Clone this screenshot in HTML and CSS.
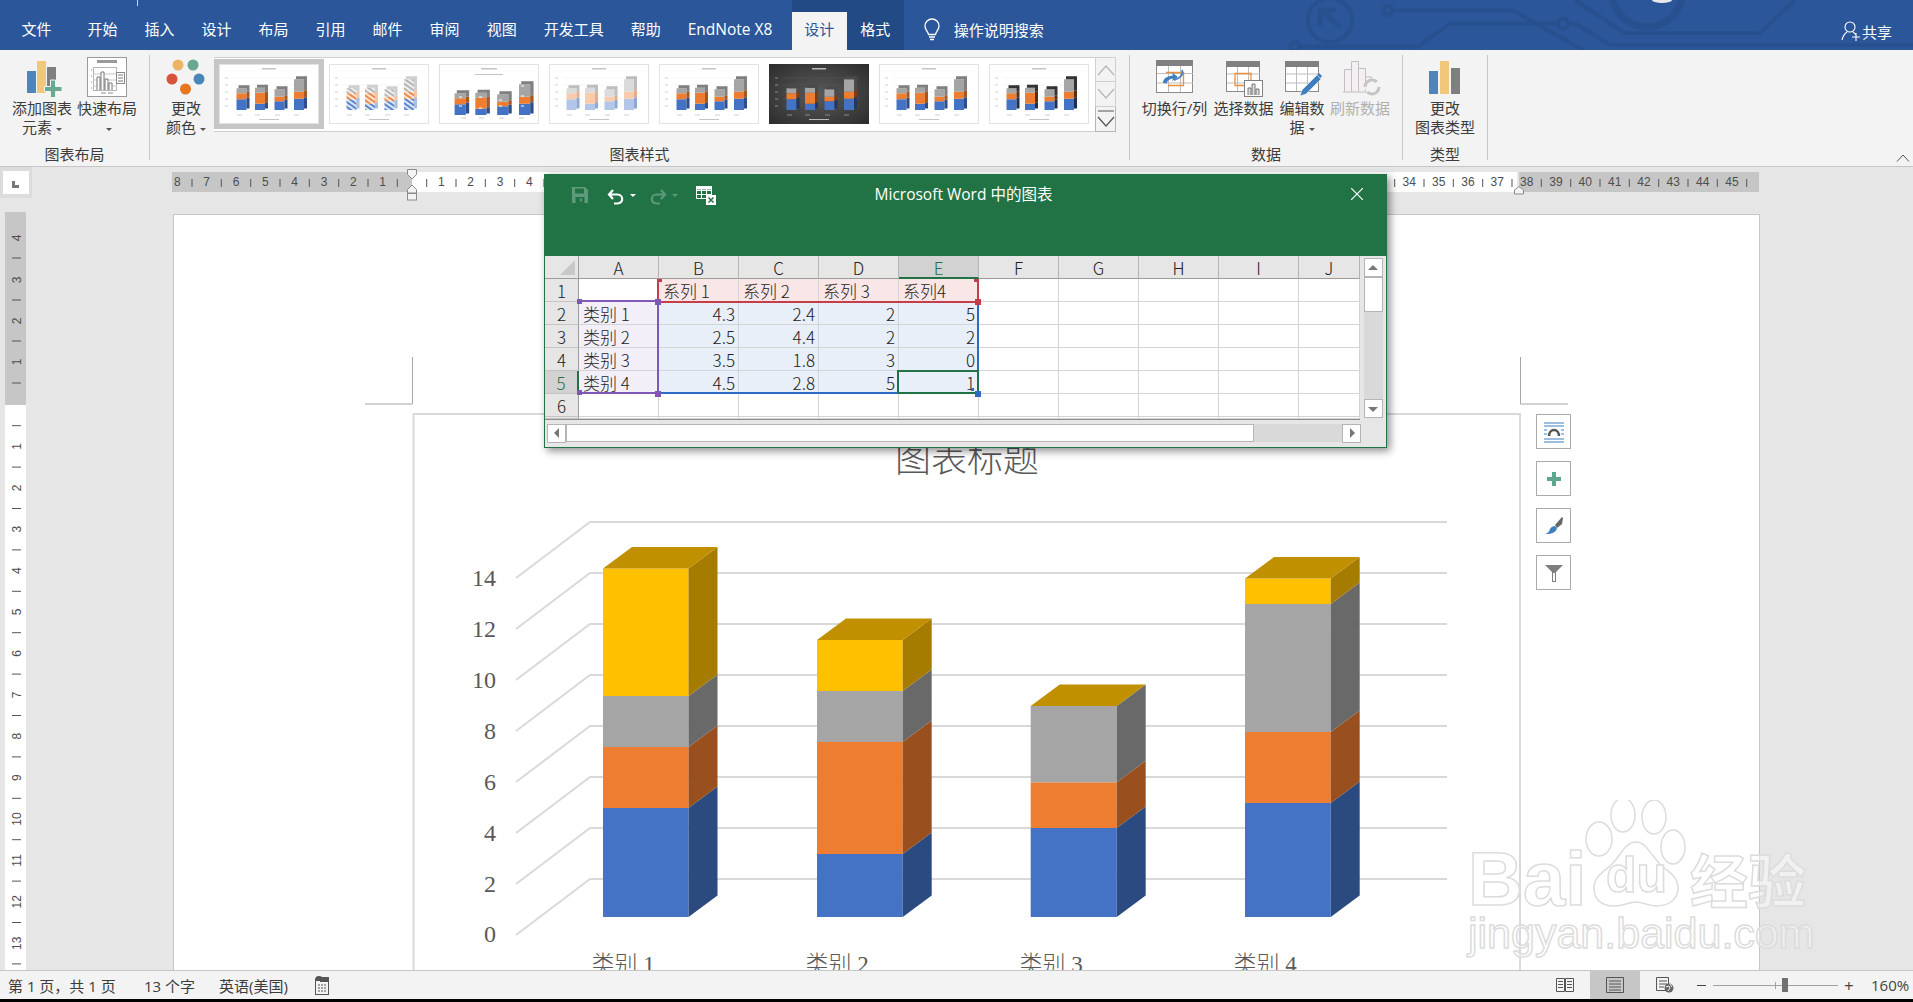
FILE: index.html
```html
<!DOCTYPE html>
<html lang="zh-CN">
<head>
  <meta charset="utf-8">
  <meta name="viewport" content="width=device-width, initial-scale=1.0">
  <title>图表 - Word</title>
  <link rel="stylesheet" href="styles.css">
</head>
<body>
<svg class="defs" width="0" height="0">
  <defs>
    <pattern id="stripe-b" width="4" height="4" patternUnits="userSpaceOnUse" patternTransform="rotate(35)"><rect width="4" height="4" fill="#dfe7f5"/><rect width="4" height="2" fill="#5b86cc"/></pattern>
    <pattern id="stripe-o" width="4" height="4" patternUnits="userSpaceOnUse" patternTransform="rotate(35)"><rect width="4" height="4" fill="#fbe6d8"/><rect width="4" height="2" fill="#ed8a47"/></pattern>
    <pattern id="stripe-g" width="4" height="4" patternUnits="userSpaceOnUse" patternTransform="rotate(35)"><rect width="4" height="4" fill="#f0f0f0"/><rect width="4" height="2" fill="#b5b5b5"/></pattern>
    <symbol id="mini-bars" viewBox="0 0 100 60">
      <rect class="s-b" x="17.5" y="35.25" width="10" height="10.75"/><rect class="s-o" x="17.5" y="29.25" width="10" height="6"/><rect class="s-g" x="17.5" y="24.25" width="10" height="5"/>
      <rect class="d-b" x="27.5" y="33.75" width="3" height="10.75"/><rect class="d-o" x="27.5" y="27.75" width="3" height="6"/><rect class="d-g" x="27.5" y="21.25" width="3" height="6.5"/><rect class="d-g" x="19.5" y="21.25" width="9" height="3"/>
      <rect class="s-b" x="36" y="39.75" width="10" height="6.25"/><rect class="s-o" x="36" y="28.75" width="10" height="11"/><rect class="s-g" x="36" y="23.75" width="10" height="5"/>
      <rect class="d-b" x="46" y="38.25" width="3" height="6.25"/><rect class="d-o" x="46" y="27.25" width="3" height="11"/><rect class="d-g" x="46" y="20.75" width="3" height="6.5"/><rect class="d-g" x="38" y="20.75" width="9" height="3"/>
      <rect class="s-b" x="55.5" y="37.25" width="10" height="8.75"/><rect class="s-o" x="55.5" y="32.75" width="10" height="4.5"/><rect class="s-g" x="55.5" y="25.25" width="10" height="7.5"/>
      <rect class="d-b" x="65.5" y="35.75" width="3" height="8.75"/><rect class="d-o" x="65.5" y="31.25" width="3" height="4.5"/><rect class="d-g" x="65.5" y="22.25" width="3" height="9"/><rect class="d-g" x="57.5" y="22.25" width="9" height="3"/>
      <rect class="s-b" x="75" y="34.75" width="10" height="11.25"/><rect class="s-o" x="75" y="27.75" width="10" height="7"/><rect class="s-g" x="75" y="15.25" width="10" height="12.5"/>
      <rect class="d-b" x="85" y="33.25" width="3" height="11.25"/><rect class="d-o" x="85" y="26.25" width="3" height="7"/><rect class="d-g" x="85" y="12.25" width="3" height="14"/><rect class="d-g" x="77" y="12.25" width="9" height="3"/>
    </symbol>
    <symbol id="mini-frame" viewBox="0 0 100 60">
      <rect class="mini-text" x="43" y="4" width="14" height="1.5"/>
      <path class="mini-grid" d="M14 14H90M14 21H90M14 28H90M14 35H90M14 42H90"/>
      <path class="mini-label" d="M6 14h3M6 21h3M6 28h3M6 35h3M6 42h3"/>
      <path class="mini-label" d="M18 51h5M36 51h5M56 51h5M75 51h5"/>
      <rect class="mini-text" x="40" y="55" width="20" height="1"/>
    </symbol>
  </defs>
</svg>

<div class="app">
  <header class="titlebar">
    <svg class="circuit" width="1913" height="50" viewBox="0 0 1913 50">
      <path d="M137.500 0v6" stroke="#c9d5e8"/>
      <g fill="none" stroke="#26508e" stroke-width="4">
        <circle cx="1330" cy="20" r="22"/>
        <path d="M1320 26V10H1336M1321 10L1340 27" stroke-width="5"/>
        <circle cx="1388" cy="10.5" r="4.5"/>
        <path d="M1392 10.5H1513L1583 50"/>
        <circle cx="1295" cy="46.5" r="4.5"/>
        <path d="M1300 46.5H1418L1450 23.5H1558"/>
        <circle cx="1563" cy="23.5" r="5"/>
        <path d="M1568 23.5H1575L1610 45H1913"/>
        <path d="M1575 0L1625 33H1760L1795 0"/>
        <circle cx="1647" cy="-8" r="35" stroke-width="7"/>
      </g>
      <ellipse cx="1662" cy="0" rx="10" ry="3" fill="#e8e8e8"/>
    </svg>
    <nav class="tabs">
      <span class="tab tab-file">文件</span>
      <span class="tab">开始</span>
      <span class="tab">插入</span>
      <span class="tab">设计</span>
      <span class="tab">布局</span>
      <span class="tab">引用</span>
      <span class="tab">邮件</span>
      <span class="tab">审阅</span>
      <span class="tab">视图</span>
      <span class="tab">开发工具</span>
      <span class="tab">帮助</span>
      <span class="tab tab-endnote">EndNote X8</span>
      <div class="context-tabs">
        <span class="tab tab-active">设计</span>
        <span class="tab tab-format">格式</span>
      </div>
      <div class="tell-me">
        <svg width="18" height="24" viewBox="0 0 18 24" fill="none" stroke="#fff" stroke-width="1.3">
          <path d="M5.5 16.5C5 13.5 2 12 2 8a7 7 0 0 1 14 0c0 4-3 5.5-3.5 8.5z"/>
          <path d="M6 19h6M7 21.5h4" stroke-width="1.6"/>
        </svg>
        <span>操作说明搜索</span>
      </div>
      <div class="share">
        <svg width="20" height="22" viewBox="0 0 20 22" fill="none" stroke="#fff" stroke-width="1.1">
          <circle cx="9" cy="7" r="5"/>
          <path d="M1 20c1-4 2-6 5-8M12 12c1 .5 2 1.5 2.500 2.500M15 13v8M11 17h8"/>
        </svg>
        <span>共享</span>
      </div>
    </nav>
  </header>

  <section class="ribbon">
    <div class="group group-layout">
      <div class="group-row">
        <div class="rbtn btn-add">
          <svg class="ricon" width="64" height="43" viewBox="11 55 64 43">
            <rect x="27" y="71" width="9" height="22" fill="#4e86bc"/>
            <rect x="37" y="61" width="9" height="32" fill="#f0c77b"/>
            <rect x="47" y="67" width="9" height="24" fill="#7f7f7f"/>
            <path d="M50.500 80h5v6.500h6.500v5h-6.500v6h-5v-6h-6v-5h6z" fill="#69a98f" stroke="#f3f3f3"/>
          </svg>
          <span class="rlabel">添加图表<br>元素<i class="caret"></i></span>
        </div>
        <div class="rbtn btn-quick">
          <svg class="ricon" width="64" height="43" viewBox="75 55 64 43">
            <rect x="87.500" y="57.500" width="39" height="39" fill="#fff" stroke="#9a9a9a"/>
            <rect x="97" y="60" width="20" height="3" fill="#9a9a9a"/>
            <path d="M91 70h1M91 76h1M91 82h1M91 88h1M101 93h5M108 93h5" stroke="#8a8a8a"/>
            <rect x="93.500" y="67.500" width="23" height="23" fill="none" stroke="#b5b5b5"/>
            <path d="M93 74h24M93 80h24M93 86h24" stroke="#c8c8c8"/>
            <path d="M97 90V77h3v13M101 90V72h3v18M105 90V79h3v11M109 90V83h3v7" fill="#fff" stroke="#777"/>
            <rect x="116.500" y="72.500" width="8" height="11" fill="#fff" stroke="#8a8a8a"/>
            <path d="M118 75h5M118 78h5M118 81h5" stroke="#777"/>
          </svg>
          <span class="rlabel">快速布局<br><i class="caret"></i></span>
        </div>
      </div>
      <div class="group-name">图表布局</div>
    </div>

    <div class="group group-styles">
      <div class="group-row">
        <div class="rbtn btn-colors">
          <svg class="ricon" width="56" height="43" viewBox="158 55 56 43">
            <circle cx="178" cy="65" r="5.500" fill="#ecb465"/>
            <circle cx="193" cy="65" r="5.500" fill="#68a890"/>
            <circle cx="172" cy="79" r="5.500" fill="#d9523a"/>
            <circle cx="199" cy="79" r="5.500" fill="#4a86b8"/>
            <circle cx="185.500" cy="89" r="5.500" fill="#e8761f"/>
          </svg>
          <span class="rlabel">更改<br>颜色<i class="caret"></i></span>
        </div>
        <div class="gallery">
          <div class="thumb thumb-on"><svg class="mini" viewBox="0 0 100 60"><use href="#mini-frame"/><use href="#mini-bars"/></svg></div>
          <div class="thumb"><svg class="mini mini-stripe" viewBox="0 0 100 60"><use href="#mini-frame"/><use href="#mini-bars"/></svg></div>
          <div class="thumb"><svg class="mini mini-big" viewBox="0 0 100 60"><rect class="mini-text" x="42" y="4" width="16" height="1.500"/><rect class="mini-text" x="36" y="10" width="28" height="1"/><use href="#mini-bars" transform="translate(-4 5) scale(1.12 1)"/><path d="M20 42h3M20 33h3M40 44h3M40 33h3M60 42h3M60 36h3M82 42h3M82 32h3M82 22h3" stroke="#fff"/><path d="M22 54h5M40 54h5M60 54h5M80 54h5" stroke="#ccc"/></svg></div>
          <div class="thumb"><svg class="mini mini-pale" viewBox="0 0 100 60"><use href="#mini-frame"/><use href="#mini-bars"/></svg></div>
          <div class="thumb"><svg class="mini" viewBox="0 0 100 60"><use href="#mini-frame"/><use href="#mini-bars"/></svg></div>
          <div class="thumb thumb-dark"><svg class="mini mini-dark" viewBox="0 0 100 60"><use href="#mini-frame"/><use href="#mini-bars"/></svg></div>
          <div class="thumb"><svg class="mini" viewBox="0 0 100 60"><use href="#mini-frame"/><use href="#mini-bars"/></svg></div>
          <div class="thumb"><svg class="mini mini-black" viewBox="0 0 100 60"><use href="#mini-frame"/><use href="#mini-bars"/></svg></div>
          <div class="gallery-scroll">
            <div class="gal-btn"><svg width="18" height="12" viewBox="0 0 18 12" fill="none" stroke="#b5b5b5" stroke-width="1.200"><path d="M1 11L9 2l8 9"/></svg></div>
            <div class="gal-btn"><svg width="18" height="12" viewBox="0 0 18 12" fill="none" stroke="#b5b5b5" stroke-width="1.200"><path d="M1 1l8 9 8-9"/></svg></div>
            <div class="gal-btn gal-more"><svg width="18" height="20" viewBox="0 0 18 20" fill="none" stroke="#555" stroke-width="1.200"><path d="M1 2h16M1 8l8 9 8-9"/></svg></div>
          </div>
        </div>
      </div>
      <div class="group-name">图表样式</div>
    </div>

    <div class="group group-data">
      <div class="group-row">
        <div class="rbtn btn-switch">
          <svg class="ricon" width="69" height="43" viewBox="1140 55 69 43">
            <rect x="1156.500" y="60.500" width="36" height="32" fill="#fff" stroke="#8a8a8a"/>
            <rect x="1156" y="60" width="37" height="6" fill="#808080"/>
            <path d="M1168.500 66v26M1180.500 66v26M1157 73.500h36M1157 83h36" stroke="#bdbdbd"/>
            <path d="M1166 72.500h17.500V85.500H1168" fill="none" stroke="#e8913f" stroke-width="1.300"/>
            <path d="M1163 83c0-5 5-7 10-7.500l-1-3 6 4.500-6 4 1-2.500c-3 .5-6 2-6 5z" fill="#3f7fbf"/>
            <path d="M1182 70c2 5-3 9-8 10" fill="none" stroke="#3f7fbf" stroke-width="1.800"/>
          </svg>
          <span class="rlabel">切换行/列</span>
        </div>
        <div class="rbtn btn-select">
          <svg class="ricon" width="69" height="43" viewBox="1209 55 69 43">
            <rect x="1226.500" y="61.500" width="33" height="30" fill="#fff" stroke="#8a8a8a"/>
            <rect x="1226" y="61" width="34" height="6" fill="#808080"/>
            <path d="M1237.500 67v24M1248.500 67v24M1227 74h33M1227 83h33" stroke="#bdbdbd"/>
            <path d="M1235 73.500h16v12h-16z" fill="none" stroke="#e8913f" stroke-width="1.300"/>
            <rect x="1244.500" y="80.500" width="18" height="16" fill="#fff" stroke="#808080"/>
            <path d="M1248 95v-7h3v7M1252 95V84h3v11M1256 95v-6h3v6" fill="#ddd" stroke="#777"/>
          </svg>
          <span class="rlabel">选择数据</span>
        </div>
        <div class="rbtn btn-edit">
          <svg class="ricon" width="48" height="43" viewBox="1278 55 48 43">
            <rect x="1285.500" y="61.500" width="33" height="30" fill="#fff" stroke="#8a8a8a"/>
            <rect x="1285" y="61" width="34" height="6" fill="#808080"/>
            <path d="M1296.500 67v24M1307.500 67v24M1286 74h33M1286 83h33" stroke="#bdbdbd"/>
            <path d="M1300 96l2-6 15-15 4 4-15 15z" fill="#3f7fbf" stroke="#f3f3f3" stroke-width=".6"/>
            <path d="M1319 73l3 3-1.500 2-3.500-3z" fill="#3f7fbf"/>
          </svg>
          <span class="rlabel">编辑数<br>据<i class="caret"></i></span>
        </div>
        <div class="rbtn btn-refresh">
          <svg class="ricon" width="60" height="43" viewBox="1330 55 60 43">
            <path d="M1344.500 91.500v-22h7v22M1351.500 91.500v-30h7v30M1358.500 91.500v-23h7v23" fill="#f3eff2" stroke="#c4bec2"/>
            <path d="M1365.500 91v-14h6v8" fill="#f3f3f3" stroke="#c4bec2"/>
            <path d="M1343 92h26" stroke="#c4bec2"/>
            <circle cx="1372" cy="87" r="7" fill="#f3f3f3" stroke="#c4c4c4" stroke-width="3" stroke-dasharray="16 6"/>
          </svg>
          <span class="rlabel rlabel-off">刷新数据</span>
        </div>
      </div>
      <div class="group-name">数据</div>
    </div>

    <div class="group group-type">
      <div class="group-row">
        <div class="rbtn btn-type">
          <svg class="ricon" width="84" height="43" viewBox="1403 55 84 43">
            <rect x="1429" y="71" width="9" height="23" fill="#4e86bc"/>
            <rect x="1440" y="61" width="9" height="33" fill="#f0c77b"/>
            <rect x="1451" y="68" width="9" height="26" fill="#7f7f7f"/>
          </svg>
          <span class="rlabel">更改<br>图表类型</span>
        </div>
      </div>
      <div class="group-name">类型</div>
    </div>

    <svg class="collapse" width="14" height="8" viewBox="0 0 14 8" fill="none" stroke="#555"><path d="M1 7.500L7 1l6 6.500"/></svg>
  </section>

  <main class="workspace">
    <div class="ruler-row">
      <div class="tab-stop"><div class="tab-stop-box"><i class="tab-glyph"></i></div></div>
      <svg class="hruler" width="1587" height="34" viewBox="172 167 1587 34">
        <rect x="172" y="172" width="240" height="20" fill="#c6c6c6"/>
        <rect x="412" y="172" width="1105" height="20" fill="#fff"/>
        <rect x="1519" y="172" width="240" height="20" fill="#c6c6c6"/>
        <path class="ticks" d="M192 179v8M221.300 179v8M250.700 179v8M280 179v8M309.300 179v8M338.700 179v8M368 179v8M397.300 179v8M426.700 179v8M456 179v8M485.300 179v8M514.700 179v8M544 179v8M1394.700 179v8M1424 179v8M1453.300 179v8M1482.700 179v8M1512 179v8M1541.300 179v8M1570.700 179v8M1600 179v8M1629.300 179v8M1658.700 179v8M1688 179v8M1717.300 179v8M1746.700 179v8"/>
        <g class="rnum">
          <text x="177.300" y="186">8</text><text x="206.700" y="186">7</text><text x="236" y="186">6</text><text x="265.300" y="186">5</text><text x="294.700" y="186">4</text><text x="324" y="186">3</text><text x="353.300" y="186">2</text><text x="382.700" y="186">1</text>
          <text x="441.300" y="186">1</text><text x="470.700" y="186">2</text><text x="500" y="186">3</text><text x="529.300" y="186">4</text>
          <text x="1409.300" y="186">34</text><text x="1438.700" y="186">35</text><text x="1468" y="186">36</text><text x="1497.300" y="186">37</text><text x="1526.700" y="186">38</text><text x="1556" y="186">39</text><text x="1585.300" y="186">40</text><text x="1614.700" y="186">41</text><text x="1644" y="186">42</text><text x="1673.300" y="186">43</text><text x="1702.700" y="186">44</text><text x="1732" y="186">45</text>
        </g>
        <g fill="#f3f3f3" stroke="#8a8a8a">
          <path d="M407.500 169.500h9v5l-4.500 4.500-4.500-4.500z"/>
          <path d="M412 185l4.500 4.500v3.500h-9v-3.500z"/>
          <rect x="407.500" y="193.500" width="9" height="6.500"/>
          <path d="M1519 186.500l4.500 3.500v4h-9v-4z"/>
        </g>
      </svg>
    </div>

    <div class="doc-row">
      <svg class="vruler" width="21" height="758" viewBox="5 212 21 758">
        <rect x="5" y="212" width="21" height="193" fill="#c6c6c6"/>
        <rect x="5" y="405" width="21" height="565" fill="#fff"/>
        <path class="ticks" d="M12 258h9M12 300h9M12 341h9M12 383h9M12 425.700h9M12 467.100h9M12 508.500h9M12 549.900h9M12 591.300h9M12 632.700h9M12 674.100h9M12 715.500h9M12 756.900h9M12 798.300h9M12 839.700h9M12 881.100h9M12 922.500h9M12 963.900h9"/>
        <g class="rnum">
          <text transform="rotate(-90 21 238)" x="21" y="238">4</text><text transform="rotate(-90 21 280)" x="21" y="280">3</text><text transform="rotate(-90 21 321)" x="21" y="321">2</text><text transform="rotate(-90 21 362)" x="21" y="362">1</text>
          <text transform="rotate(-90 21 446.400)" x="21" y="446.400">1</text><text transform="rotate(-90 21 487.800)" x="21" y="487.800">2</text><text transform="rotate(-90 21 529.200)" x="21" y="529.200">3</text><text transform="rotate(-90 21 570.600)" x="21" y="570.600">4</text><text transform="rotate(-90 21 612)" x="21" y="612">5</text><text transform="rotate(-90 21 653.400)" x="21" y="653.400">6</text><text transform="rotate(-90 21 694.800)" x="21" y="694.800">7</text><text transform="rotate(-90 21 736.200)" x="21" y="736.200">8</text><text transform="rotate(-90 21 777.600)" x="21" y="777.600">9</text><text transform="rotate(-90 21 819)" x="21" y="819">10</text><text transform="rotate(-90 21 860.400)" x="21" y="860.400">11</text><text transform="rotate(-90 21 901.800)" x="21" y="901.800">12</text><text transform="rotate(-90 21 943.200)" x="21" y="943.200">13</text>
        </g>
      </svg>

      <div class="page">
        <svg class="chart" width="1585" height="756" viewBox="174 215 1585 756">
          <path d="M412.500 357V404H365M1520.500 357V404H1568" fill="none" stroke="#a6a6a6"/>
          <path d="M413.500 980V414H1520V980" fill="#fff" stroke="#d9d9d9" stroke-width="2"/>
          <text class="chart-title" x="967" y="472">图表标题</text>
          <path class="grid" d="M516 578L590 522H1447M516 629L590 573H1447M516 680L590 624H1447M516 731L590 675H1447M516 782L590 726H1447M516 833L590 777H1447M516 884L590 828H1447M516 935L590 879H1447"/>
          <g class="axis">
            <text x="496" y="586">14</text><text x="496" y="637">12</text><text x="496" y="688">10</text><text x="496" y="739">8</text><text x="496" y="790">6</text><text x="496" y="841">4</text><text x="496" y="892">2</text><text x="496" y="942">0</text>
          </g>

          <!-- 类别 1 -->
          <rect class="f-blue" x="603" y="808" width="85.500" height="109"/>
          <rect class="f-orange" x="603" y="747" width="85.500" height="61"/>
          <rect class="f-gray" x="603" y="696" width="85.500" height="51"/>
          <rect class="f-yellow" x="603" y="568.500" width="85.500" height="127.500"/>
          <polygon class="e-blue" points="688.500,917 717.500,895.500 717.500,786.500 688.500,808"/>
          <polygon class="e-orange" points="688.500,808 717.500,786.500 717.500,725.500 688.500,747"/>
          <polygon class="e-gray" points="688.500,747 717.500,725.500 717.500,674.500 688.500,696"/>
          <polygon class="e-yellow" points="688.500,696 717.500,674.500 717.500,547 688.500,568.500"/>
          <polygon class="e-top" points="603,568.500 688.500,568.500 717.500,547 632,547"/>

          <!-- 类别 2 -->
          <rect class="f-blue" x="817" y="854" width="85.700" height="63"/>
          <rect class="f-orange" x="817" y="742" width="85.700" height="112"/>
          <rect class="f-gray" x="817" y="691" width="85.700" height="51"/>
          <rect class="f-yellow" x="817" y="640" width="85.700" height="51"/>
          <polygon class="e-blue" points="902.700,917 931.700,895.500 931.700,832.500 902.700,854"/>
          <polygon class="e-orange" points="902.700,854 931.700,832.500 931.700,720.500 902.700,742"/>
          <polygon class="e-gray" points="902.700,742 931.700,720.500 931.700,669.500 902.700,691"/>
          <polygon class="e-yellow" points="902.700,691 931.700,669.500 931.700,618.500 902.700,640"/>
          <polygon class="e-top" points="817,640 902.700,640 931.700,618.500 846,618.500"/>

          <!-- 类别 3 -->
          <rect class="f-blue" x="1030.700" y="828" width="86" height="89"/>
          <rect class="f-orange" x="1030.700" y="782.300" width="86" height="45.700"/>
          <rect class="f-gray" x="1030.700" y="706" width="86" height="76.300"/>
          <polygon class="e-blue" points="1116.700,917 1145.700,895.500 1145.700,806.500 1116.700,828"/>
          <polygon class="e-orange" points="1116.700,828 1145.700,806.500 1145.700,760.800 1116.700,782.300"/>
          <polygon class="e-gray" points="1116.700,782.300 1145.700,760.800 1145.700,684.500 1116.700,706"/>
          <polygon class="e-top" points="1030.700,706 1116.700,706 1145.700,684.500 1059.700,684.500"/>

          <!-- 类别 4 -->
          <rect class="f-blue" x="1245" y="803" width="85.700" height="114"/>
          <rect class="f-orange" x="1245" y="732" width="85.700" height="71"/>
          <rect class="f-gray" x="1245" y="604" width="85.700" height="128"/>
          <rect class="f-yellow" x="1245" y="578.500" width="85.700" height="25.500"/>
          <polygon class="e-blue" points="1330.700,917 1359.700,895.500 1359.700,781.500 1330.700,803"/>
          <polygon class="e-orange" points="1330.700,803 1359.700,781.500 1359.700,710.500 1330.700,732"/>
          <polygon class="e-gray" points="1330.700,732 1359.700,710.500 1359.700,582.500 1330.700,604"/>
          <polygon class="e-yellow" points="1330.700,604 1359.700,582.500 1359.700,557 1330.700,578.500"/>
          <polygon class="e-top" points="1245,578.500 1330.700,578.500 1359.700,557 1274,557"/>

          <g class="cats">
            <text x="623" y="972">类别 1</text><text x="837" y="972">类别 2</text><text x="1051" y="972">类别 3</text><text x="1265" y="972">类别 4</text>
          </g>
        </svg>

        <div class="chart-tools">
          <div class="tool">
            <svg width="22" height="22" viewBox="0 0 22 22" fill="none"><path d="M1 2h20M1 5h20M1 18h20M1 21h20" stroke="#3f7fbf"/><path d="M1 9h3M18 9h3M1 13h3M18 13h3" stroke="#3f7fbf"/><path d="M6 15c0-8 10-8 10 0" stroke="#555" stroke-width="2.500"/></svg>
          </div>
          <div class="tool">
            <svg width="16" height="16" viewBox="0 0 16 16"><path d="M6 1h4v5h5v4h-5v5H6v-5H1V6h5z" fill="#5da88c"/></svg>
          </div>
          <div class="tool">
            <svg width="20" height="20" viewBox="0 0 20 20"><path d="M11 9l7-8 1 1-1 6-5 4z" fill="#666"/><path d="M11 10l2 2c-1 4-4 6-12 6 3-1 4-2 5-5 1-2 3-3 5-3z" fill="#3f7fbf"/></svg>
          </div>
          <div class="tool">
            <svg width="20" height="20" viewBox="0 0 20 20"><path d="M1 2h18l-7 7v10H8V9z" fill="#7f7f7f"/><path d="M9 10v8h2v-8" fill="#fff"/></svg>
          </div>
        </div>
      </div>
    </div>
  </main>

  <footer class="statusbar">
    <span class="st st-page">第 1 页，共 1 页</span>
    <span class="st st-words">13 个字</span>
    <span class="st st-lang">英语(美国)</span>
    <svg class="st-macro" width="16" height="19" viewBox="0 0 16 19"><circle cx="5" cy="4" r="4" fill="#555"/><rect x="1.500" y="4.500" width="13" height="14" fill="#f3f3f3" stroke="#555"/><rect x="6" y="1" width="9" height="5" fill="#555"/><path d="M4 9h2M7 9h2M10 9h2M4 12h2M7 12h2M10 12h2M4 15h2M7 15h2M10 15h2" stroke="#555"/></svg>
    <div class="status-right">
      <div class="view">
        <svg width="18" height="15" viewBox="0 0 18 15" fill="none" stroke="#555"><path d="M.5.500h8v13h-8zM9.500.500h8v13h-8zM2 3.500h5M2 6.500h5M2 9.500h5M11 3.500h5M11 6.500h5M11 9.500h5"/></svg>
      </div>
      <div class="view view-on">
        <svg width="18" height="16" viewBox="0 0 18 16" fill="none" stroke="#555"><path d="M.5.500h17v15H.5zM3 4h12M3 7h12M3 10h12M3 13h12"/></svg>
      </div>
      <div class="view">
        <svg width="18" height="16" viewBox="0 0 18 16" fill="none"><path d="M.5.500h12v13H.5zM3 4h8M3 7h8M3 10h5" stroke="#555"/><circle cx="13" cy="11" r="4.500" fill="#666"/><path d="M10 10l3-1 1 2-2 3M14 7l2 3" stroke="#f3f3f3"/></svg>
      </div>
      <div class="zoom">
        <i class="zoom-minus"></i>
        <div class="zoom-track"><i class="zoom-mark"></i><i class="zoom-thumb"></i></div>
        <span class="zoom-plus">+</span>
        <span class="zoom-pct">160%</span>
      </div>
    </div>
  </footer>
  <div class="taskbar"></div>

  <!-- 浮动的 Excel 窗口 -->
  <section class="xl-window">
    <div class="xl-head">
      <svg class="xl-save" width="16" height="16" viewBox="0 0 16 16"><path d="M0 0h13l3 3v13H0z" fill="#5f9a7c"/><rect x="3" y="1.500" width="9" height="5" fill="#217346"/><rect x="3.500" y="10" width="9" height="6" fill="#217346"/><rect x="8" y="11.500" width="2" height="3" fill="#5f9a7c"/></svg>
      <svg class="xl-undo" width="18" height="16" viewBox="0 0 18 16" fill="none" stroke="#fff" stroke-width="2.200"><path d="M6 1L2 5.500 6 10M2.500 5.500h8c6 0 6.500 9 0 9H7"/></svg>
      <i class="caret caret-white"></i>
      <svg class="xl-redo" width="18" height="16" viewBox="0 0 18 16" fill="none" stroke="#5c9a7a" stroke-width="2.200"><path d="M12 1l4 4.500-4 4.500M15.500 5.500h-8c-6 0-6.500 9 0 9H11"/></svg>
      <i class="caret caret-dim"></i>
      <svg class="xl-table" width="20" height="19" viewBox="0 0 20 19"><path d="M.5.500h15v12H.5zM.5 4.500h15M.5 8.500h15M5.500.500v12M10.500.500v12" fill="none" stroke="#fff"/><rect x="0" y="0" width="16" height="3.500" fill="#fff"/><rect x="10" y="9" width="10" height="10" fill="#fff"/><path d="M12.500 11.500l5 5M17.500 11.500l-5 5" stroke="#217346" stroke-width="1.500"/></svg>
      <span class="xl-title">Microsoft Word 中的图表</span>
      <svg class="xl-close" width="12" height="12" viewBox="0 0 12 12" stroke="#fff" stroke-width="1.200"><path d="M0 0l12 12M12 0L0 12"/></svg>
    </div>

    <div class="xl-body">
      <div class="xl-left">
        <div class="sheet">
          <div class="corner"><i class="corner-tri"></i></div>
          <div class="col-h">A</div><div class="col-h">B</div><div class="col-h">C</div><div class="col-h">D</div><div class="col-h col-on">E</div><div class="col-h">F</div><div class="col-h">G</div><div class="col-h">H</div><div class="col-h">I</div><div class="col-h">J</div>

          <div class="row-h">1</div>
          <div class="cell"></div><div class="cell c-name">系列 1</div><div class="cell c-name">系列 2</div><div class="cell c-name">系列 3</div><div class="cell c-name">系列4</div>
          <div class="cell"></div><div class="cell"></div><div class="cell"></div><div class="cell"></div><div class="cell"></div>

          <div class="row-h">2</div>
          <div class="cell c-cat">类别 1</div><div class="cell c-val">4.3</div><div class="cell c-val">2.4</div><div class="cell c-val">2</div><div class="cell c-val">5</div>
          <div class="cell"></div><div class="cell"></div><div class="cell"></div><div class="cell"></div><div class="cell"></div>

          <div class="row-h">3</div>
          <div class="cell c-cat">类别 2</div><div class="cell c-val">2.5</div><div class="cell c-val">4.4</div><div class="cell c-val">2</div><div class="cell c-val">2</div>
          <div class="cell"></div><div class="cell"></div><div class="cell"></div><div class="cell"></div><div class="cell"></div>

          <div class="row-h">4</div>
          <div class="cell c-cat">类别 3</div><div class="cell c-val">3.5</div><div class="cell c-val">1.8</div><div class="cell c-val">3</div><div class="cell c-val">0</div>
          <div class="cell"></div><div class="cell"></div><div class="cell"></div><div class="cell"></div><div class="cell"></div>

          <div class="row-h row-on">5</div>
          <div class="cell c-cat">类别 4</div><div class="cell c-val">4.5</div><div class="cell c-val">2.8</div><div class="cell c-val">5</div><div class="cell c-val">1</div>
          <div class="cell"></div><div class="cell"></div><div class="cell"></div><div class="cell"></div><div class="cell"></div>

          <div class="row-h">6</div>
          <div class="cell"></div><div class="cell"></div><div class="cell"></div><div class="cell"></div><div class="cell"></div>
          <div class="cell"></div><div class="cell"></div><div class="cell"></div><div class="cell"></div><div class="cell"></div>

          <div class="row-h"></div>
          <div class="cell"></div><div class="cell"></div><div class="cell"></div><div class="cell"></div><div class="cell"></div>
          <div class="cell"></div><div class="cell"></div><div class="cell"></div><div class="cell"></div><div class="cell"></div>

          <!-- 数据区域的彩色选框 -->
          <div class="sel sel-cat"><i class="hd hd-tl"></i><i class="hd hd-bl"></i></div>
          <div class="sel sel-val"></div>
          <div class="sel sel-name"><i class="hd hd-tl"></i><i class="hd hd-tr"></i></div>
          <div class="sel sel-active"></div>
          <i class="hd hd-purple-a"></i>
          <i class="hd hd-purple-b"></i>
          <i class="hd hd-red"></i>
          <i class="hd hd-blue"></i>
          <i class="hd hd-fill"></i>
        </div>
        <div class="hscroll">
          <div class="sb-btn"><i class="arrow-left"></i></div>
          <div class="h-thumb"></div>
          <div class="h-track"></div>
          <div class="sb-btn"><i class="arrow-right"></i></div>
        </div>
      </div>
      <div class="vscroll">
        <div class="sb-btn"><i class="arrow-up"></i></div>
        <div class="v-thumb"></div>
        <div class="v-track"></div>
        <div class="sb-btn"><i class="arrow-down"></i></div>
      </div>
    </div>
  </section>

  <!-- 百度经验水印 -->
  <svg class="watermark" width="360" height="170" viewBox="1460 800 360 170">
    <g class="wm">
      <text class="wm-bai" x="1468" y="905">Bai</text>
      <ellipse cx="1623" cy="815" rx="12" ry="17"/>
      <ellipse cx="1654" cy="817" rx="12" ry="17"/>
      <ellipse cx="1599" cy="839" rx="13" ry="17"/>
      <ellipse cx="1673" cy="847" rx="12" ry="17"/>
      <path d="M1636 842c10 0 14 12 24 22 8 8 18 12 18 24 0 12-10 18-22 18-8 0-13-4-20-4s-12 4-22 4c-14 0-20-8-20-18 0-12 10-16 18-24 10-10 13-22 24-22z"/>
      <text class="wm-du" x="1606" y="892">du</text>
      <text class="wm-cn" x="1690" y="903">经验</text>
      <text class="wm-url" x="1468" y="948">jingyan.baidu.com</text>
    </g>
  </svg>
</div>
</body>
</html>
```

FILE: styles.css
```css
:root {
  --word-blue: #2b579a;
  --word-dark: #224b86;
  --ribbon: #f3f3f3;
  --desk: #e6e6e6;
  --line: #c6c6c6;
  --text: #3c3c3c;
  --xl-green: #217346;
  --cjk: "Open Sans", "Noto Sans CJK SC", sans-serif;
}

* {
  margin: 0;
  padding: 0;
  box-sizing: border-box;
}

body {
  width: 1913px;
  height: 1002px;
  overflow: hidden;
  font-family: var(--cjk);
  font-size: 15px;
  color: var(--text);
  background: #000;
}

.defs {
  position: absolute;
}

.app {
  position: relative;
  width: 1913px;
  height: 1002px;
  display: flex;
  flex-direction: column;
  overflow: hidden;
}

/* title bar and tabs */
.titlebar {
  position: relative;
  height: 50px;
  flex: none;
  background: var(--word-blue);
}

.circuit {
  position: absolute;
  left: 0;
  top: 0;
}

.tabs {
  position: relative;
  display: flex;
  align-items: flex-end;
  height: 50px;
}

.tab {
  height: 38px;
  padding: 0 13.5px;
  line-height: 35px;
  color: #fff;
  white-space: nowrap;
  flex: none;
}

.tab-file {
  padding: 0 22.5px 0 21.5px;
}

.tab-endnote {
  width: 114px;
  font-size: 15.5px;
}

.context-tabs {
  display: flex;
  align-items: flex-end;
  height: 50px;
  margin-left: 3.5px;
  background: var(--word-dark);
}

.tab-active {
  width: 55px;
  padding: 0 12.5px;
  background: var(--ribbon);
  color: var(--word-blue);
}

.tab-format {
  width: 57px;
}

.tell-me {
  display: flex;
  align-items: center;
  gap: 13px;
  height: 38px;
  margin-left: 19px;
  padding-bottom: 3px;
  color: #fff;
  font-size: 15px;
}

.share {
  display: flex;
  align-items: center;
  gap: 1px;
  height: 38px;
  margin-left: auto;
  padding: 0 21px 0 0;
  color: #fff;
  font-size: 15px;
}

/* ribbon */
.ribbon {
  position: relative;
  display: flex;
  flex: none;
  height: 117px;
  padding-top: 5px;
  background: var(--ribbon);
  border-bottom: 1px solid var(--line);
}

.group {
  display: flex;
  flex-direction: column;
  height: 105px;
  border-right: 1px solid var(--line);
}

.group-layout {
  width: 150px;
  padding-left: 11px;
}

.group-styles {
  width: 980px;
  padding-left: 8px;
}

.group-data {
  width: 273px;
  padding-left: 10px;
}

.group-type {
  width: 85px;
}

.group-row {
  display: flex;
  height: 85px;
}

.group-name {
  height: 20px;
  margin-bottom: -4px;
  margin-top: 4px;
  line-height: 20px;
  text-align: center;
}

.group-layout .group-name {
  margin-left: -11px;
}

.group-styles .group-name {
  margin-left: -8px;
}

.group-data .group-name {
  margin-left: -10px;
}

.rbtn {
  flex: none;
  text-align: center;
}

.btn-add,
.btn-quick {
  width: 64px;
}

.btn-add .rlabel {
  margin-left: -2px;
}

.btn-colors {
  width: 56px;
}

.btn-switch,
.btn-select {
  width: 69px;
}

.btn-edit {
  width: 48px;
  margin-right: 4px;
}

.btn-refresh {
  width: 60px;
}

.btn-type {
  width: 84px;
}

.ricon {
  display: block;
}

.rlabel {
  display: block;
  padding-top: 1px;
  line-height: 19px;
  white-space: nowrap;
}

.rlabel-off {
  color: #b1b1b1;
}

.caret {
  display: inline-block;
  width: 0;
  height: 0;
  margin-left: 4px;
  vertical-align: 2px;
  border-left: 3px solid transparent;
  border-right: 3px solid transparent;
  border-top: 3px solid #555;
}

.gallery {
  display: flex;
  flex: none;
  width: 902px;
  height: 75px;
  margin-top: 2px;
  padding-top: 1px;
  background: #fff;
  border: 1px solid #d0d0d0;
  border-left: 0;
}

.thumb {
  flex: none;
  width: 110px;
  height: 70px;
  padding: 5px;
}

.thumb-on {
  background: var(--line);
}

.mini {
  display: block;
  width: 100px;
  height: 60px;
  background: #fff;
  outline: 1px solid #e2e2e2;
  outline-offset: -1px;
  --b: #4472c4;
  --o: #ed7d31;
  --g: #a5a5a5;
  --bd: #2c4f8c;
  --od: #a8571f;
  --gd: #808080;
  --label: #d0d0d0;
  --rule: #f0f0f0;
  --ink: #c4c4c4;
}

.mini-stripe {
  --b: url(#stripe-b);
  --o: url(#stripe-o);
  --g: url(#stripe-g);
  --bd: #a9bde0;
  --od: #f2c4a6;
  --gd: #cfcfcf;
}

.mini-pale {
  --b: #b4c6e7;
  --o: #f8cbad;
  --g: #dbdbdb;
  --bd: #8ea7d4;
  --od: #e4ae8a;
  --gd: #bdbdbd;
}

.mini-dark {
  background: radial-gradient(ellipse at center, #5a5a5a, #2c2c2c);
  outline: 0;
  --rule: #555;
  --label: #8a8a8a;
  --ink: #bbb;
  --bd: #1f3864;
  --od: #843c0c;
  --gd: #4a4a4a;
}

.mini-black {
  --bd: #1d2f52;
  --od: #5c2e10;
  --gd: #333;
}

.s-b { fill: var(--b); }
.s-o { fill: var(--o); }
.s-g { fill: var(--g); }
.d-b { fill: var(--bd); }
.d-o { fill: var(--od); }
.d-g { fill: var(--gd); }
.mini-text { fill: var(--ink); }
.mini-grid { stroke: var(--rule); stroke-width: .6; fill: none; }
.mini-label { stroke: var(--label); stroke-width: 1; fill: none; }

.gallery-scroll {
  display: flex;
  flex-direction: column;
  flex: none;
  width: 21px;
  height: 75px;
  margin: -2px 0 0 1px;
  background: var(--ribbon);
}

.gal-btn {
  display: flex;
  align-items: center;
  justify-content: center;
  height: 25px;
  border: 1px solid #d0d0d0;
  border-top: 0;
}

.gal-btn:first-child {
  border-top: 1px solid #d0d0d0;
}

.gal-more {
  border-color: #b5b5b5;
}

.collapse {
  position: absolute;
  right: 3px;
  top: 104px;
}

/* document area */
.workspace {
  flex: 1;
  min-height: 0;
  display: flex;
  flex-direction: column;
  background: var(--desk);
}

.ruler-row {
  position: relative;
  display: flex;
  flex: none;
  height: 45px;
}

.tab-stop {
  flex: none;
  width: 32px;
  height: 31px;
  padding: 4px 3px;
  background: #dcdcdc;
}

.tab-stop-box {
  position: relative;
  width: 26px;
  height: 23px;
  background: #fff;
}

.tab-glyph {
  position: absolute;
  left: 9px;
  top: 10px;
  width: 7px;
  height: 7px;
  border-left: 3px solid #777;
  border-bottom: 3px solid #777;
}

.hruler {
  flex: none;
  margin-left: 140px;
  overflow: visible;
}

.ticks {
  stroke: #555;
  stroke-width: 1;
  fill: none;
}

.rnum text {
  font-family: "Liberation Sans", sans-serif;
  font-size: 12px;
  fill: #4d4d4d;
  text-anchor: middle;
}

.doc-row {
  display: flex;
  flex: 1;
  min-height: 0;
}

.vruler {
  flex: none;
  margin-left: 5px;
}

.page {
  position: relative;
  flex: none;
  width: 1587px;
  height: 756px;
  margin: 2px 0 0 147px;
  background: #fff;
  border: 1px solid var(--line);
  border-bottom: 0;
  overflow: hidden;
}

.chart {
  display: block;
}

.chart-title {
  font-family: "Liberation Serif", "Noto Sans CJK SC", serif;
  font-weight: 300;
  font-size: 36px;
  fill: #595959;
  text-anchor: middle;
}

.grid {
  fill: none;
  stroke: #d9d9d9;
  stroke-width: 2;
}

.axis text {
  font-family: "Liberation Serif", serif;
  font-size: 24px;
  fill: #595959;
  text-anchor: end;
}

.cats text {
  font-family: "Liberation Serif", "Noto Sans CJK SC", serif;
  font-weight: 300;
  font-size: 23px;
  fill: #595959;
  text-anchor: middle;
}

.f-blue { fill: #4472c4; }
.f-orange { fill: #ed7d31; }
.f-gray { fill: #a5a5a5; }
.f-yellow { fill: #ffc000; }
.e-blue { fill: #2a4a80; }
.e-orange { fill: #9a4f1e; }
.e-gray { fill: #696969; }
.e-yellow { fill: #a67c00; }
.e-top { fill: #c09000; }

.chart-tools {
  position: absolute;
  left: 1362px;
  top: 199px;
  display: flex;
  flex-direction: column;
  gap: 12px;
}

.tool {
  display: flex;
  align-items: center;
  justify-content: center;
  width: 35px;
  height: 35px;
  background: #fff;
  border: 1px solid #ababab;
}

/* status bar */
.statusbar {
  display: flex;
  align-items: center;
  flex: none;
  height: 29px;
  padding-left: 8px;
  background: var(--ribbon);
  border-top: 1px solid var(--line);
  font-size: 15px;
}

.st {
  white-space: nowrap;
}

.st-page {
  width: 136px;
}

.st-words {
  width: 75px;
}

.st-lang {
  width: 95px;
}

.status-right {
  display: flex;
  align-items: center;
  height: 100%;
  margin-left: auto;
}

.view {
  display: flex;
  align-items: center;
  justify-content: center;
  width: 50px;
  height: 100%;
}

.view-on {
  background: var(--line);
}

.zoom {
  display: flex;
  align-items: center;
  padding-left: 7px;
  width: 223px;
}

.zoom-minus {
  width: 9px;
  height: 1px;
  margin-right: 7px;
  background: #444;
}

.zoom-track {
  position: relative;
  width: 125px;
  height: 1px;
  background: #a0a0a0;
}

.zoom-mark {
  position: absolute;
  left: 62px;
  top: -3px;
  width: 1px;
  height: 7px;
  background: #a0a0a0;
}

.zoom-thumb {
  position: absolute;
  left: 69px;
  top: -7px;
  width: 6px;
  height: 14px;
  background: #707070;
}

.zoom-plus {
  margin-left: 6px;
  width: 27px;
  font-size: 17px;
  color: #444;
}

.zoom-pct {
  font-size: 15px;
  color: #444;
}

.taskbar {
  flex: none;
  height: 3px;
  background: #000;
}

/* excel window */
.xl-window {
  position: absolute;
  z-index: 2;
  left: 544px;
  top: 174px;
  width: 843px;
  height: 274px;
  background: var(--desk);
  border: 1px solid var(--xl-green);
  border-top: 0;
  box-shadow: 3px 3px 8px rgba(0, 0, 0, .45);
}

.xl-head {
  position: relative;
  display: flex;
  align-items: flex-start;
  height: 82px;
  padding: 13px 0 0 27px;
  background: var(--xl-green);
}

.xl-undo {
  margin-left: 19px;
  margin-top: 2px;
}

.caret-white {
  margin: 7px 0 0 5px;
  border-top-color: #fff;
}

.caret-dim {
  margin: 7px 0 0 5px;
  border-top-color: #5c9a7a;
}

.xl-redo {
  margin-left: 13px;
  margin-top: 2px;
}

.xl-table {
  margin-left: 18px;
  margin-top: -1px;
}

.xl-title {
  position: absolute;
  left: 0;
  right: 4px;
  top: 8px;
  text-align: center;
  color: #fff;
  font-size: 15.500px;
}

.xl-close {
  position: absolute;
  right: 23px;
  top: 14px;
}

.xl-body {
  display: flex;
}

.xl-left {
  width: 816px;
}

.sheet {
  position: relative;
  display: grid;
  grid-template-columns: 34px repeat(9, 80px) 61px;
  grid-template-rows: 23px repeat(6, 23px) 2px;
  width: 815px;
  height: 164px;
  font-family: "Noto Sans CJK SC", sans-serif;
  font-weight: 300;
  font-size: 17px;
  color: #222;
  background: #fff;
  border-bottom: 1px solid #8f8f8f;
}

.corner {
  position: relative;
  background: var(--desk);
  border-right: 1px solid #9b9b9b;
  border-bottom: 1px solid #9b9b9b;
}

.corner-tri {
  position: absolute;
  right: 3px;
  bottom: 3px;
  width: 0;
  height: 0;
  border-left: 15px solid transparent;
  border-bottom: 15px solid #c8c8c8;
}

.col-h {
  background: var(--desk);
  border-right: 1px solid #b5b5b5;
  border-bottom: 1px solid #9b9b9b;
  text-align: center;
  line-height: 24px;
}

.col-on {
  background: #d2d2d2;
  border-bottom: 2px solid var(--xl-green);
  color: var(--xl-green);
}

.row-h {
  background: var(--desk);
  border-right: 1px solid #9b9b9b;
  border-bottom: 1px solid #c4c4c4;
  text-align: center;
  line-height: 24px;
}

.row-on {
  background: #d2d2d2;
  border-right: 2px solid var(--xl-green);
  color: var(--xl-green);
}

.cell {
  border-right: 1px solid #d4d4d4;
  border-bottom: 1px solid #d4d4d4;
  padding: 0 3px 0 4px;
  line-height: 24px;
  white-space: nowrap;
}

.c-name {
  background: #f9e7e7;
}

.c-cat {
  background: #f3eff9;
}

.c-val {
  background: #e8eff9;
  text-align: right;
}

.sel {
  position: absolute;
}

.sel-cat {
  left: 34px;
  top: 44px;
  width: 80px;
  height: 94px;
  border: 2px solid #7f57b4;
  border-left: 0;
}

.sel-val {
  left: 114px;
  top: 46px;
  width: 320px;
  height: 92px;
  border-right: 2px solid #2e6cc4;
  border-bottom: 2px solid #2e6cc4;
}

.sel-name {
  left: 112px;
  top: 23px;
  width: 322px;
  height: 24px;
  border: 2px solid #c43e4a;
  border-top: 0;
}

.sel-active {
  left: 352px;
  top: 114px;
  width: 82px;
  height: 24px;
  border: 2px solid var(--xl-green);
}

.hd {
  position: absolute;
  display: block;
  width: 5px;
  height: 5px;
}

.sel-cat .hd-tl,
.sel-cat .hd-bl {
  left: -2px;
  background: #7f57b4;
}

.sel-cat .hd-tl {
  top: -3px;
}

.sel-cat .hd-bl {
  bottom: -3px;
}

.sel-name .hd-tl,
.sel-name .hd-tr {
  top: 0;
  height: 3px;
  background: #c43e4a;
}

.sel-name .hd-tl {
  left: -2px;
}

.sel-name .hd-tr {
  right: -2px;
}

.hd-purple-a,
.hd-purple-b {
  left: 110px;
  width: 6px;
  height: 6px;
  background: #7f57b4;
}

.hd-purple-a {
  top: 43px;
}

.hd-purple-b {
  top: 135px;
}

.hd-red {
  left: 430px;
  top: 43px;
  width: 6px;
  height: 6px;
  background: #c43e4a;
}

.hd-blue {
  left: 430px;
  top: 135px;
  width: 6px;
  height: 6px;
  background: #2e6cc4;
}

.hd-fill {
  left: 426px;
  top: 132px;
  width: 3px;
  height: 3px;
  background: #2e6cc4;
}

.hscroll {
  display: flex;
  height: 18px;
  margin: 4px 0 0 2px;
}

.sb-btn {
  position: relative;
  flex: none;
  width: 19px;
  height: 19px;
  background: #fff;
  border: 1px solid #b5b5b5;
}

.h-thumb {
  flex: none;
  width: 688px;
  background: #fff;
  border: 1px solid #b5b5b5;
}

.h-track {
  flex: 1;
  background: #d9d9d9;
}

.vscroll {
  display: flex;
  flex-direction: column;
  width: 19px;
  height: 160px;
  margin: 2px 0 0 3px;
}

.v-thumb {
  flex: none;
  height: 35px;
  background: #fff;
  border: 1px solid #b5b5b5;
}

.v-track {
  flex: 1;
  background: #d9d9d9;
}

.arrow-up,
.arrow-down,
.arrow-left,
.arrow-right {
  position: absolute;
  width: 0;
  height: 0;
}

.arrow-up,
.arrow-down {
  left: 3px;
  border-left: 5px solid transparent;
  border-right: 5px solid transparent;
}

.arrow-up {
  top: 6px;
  border-bottom: 5px solid #777;
}

.arrow-down {
  top: 7px;
  border-top: 5px solid #777;
}

.arrow-left,
.arrow-right {
  top: 3px;
  border-top: 5px solid transparent;
  border-bottom: 5px solid transparent;
}

.arrow-left {
  left: 6px;
  border-right: 5px solid #777;
}

.arrow-right {
  left: 7px;
  border-left: 5px solid #777;
}

/* watermark */
.watermark {
  position: absolute;
  z-index: 3;
  left: 1460px;
  top: 800px;
  pointer-events: none;
}

.wm {
  fill: rgba(255, 255, 255, .45);
  stroke: #dcdcdc;
  stroke-width: 1.5;
}

.wm text {
  font-family: "Liberation Sans", "Noto Sans CJK SC", sans-serif;
  font-weight: 700;
}

.wm-bai {
  font-size: 76px;
}

.wm-du {
  font-size: 50px;
}

.wm-cn {
  font-size: 58px;
}

.wm .wm-url {
  font-size: 43px;
  font-weight: 400;
}
```
